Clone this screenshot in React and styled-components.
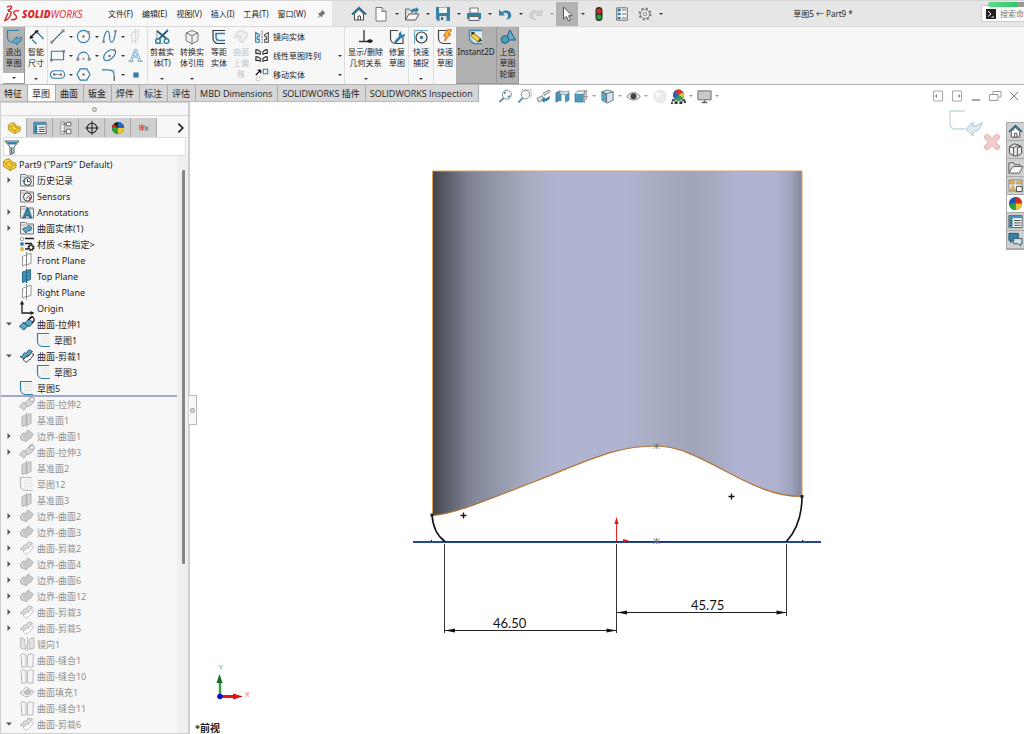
import React from "react";
import styled, { createGlobalStyle, css } from "styled-components";

const Global = createGlobalStyle`
  * { box-sizing: border-box; }
  html, body, #root { height: 100%; }
  body { margin: 0; overflow: hidden; background: #fff; }
  body, button, input {
    font-family: "Noto Sans", "Noto Sans CJK SC", sans-serif;
    font-size: 9px;
    color: #222;
  }
  button { border: 0; padding: 0; margin: 0; background: none; }
  ul { list-style: none; margin: 0; padding: 0; }
  svg { display: block; flex: none; }
`;

const blue = "#2f7fa6";
const sky = "#62aed0";

/* ---------- icon drawings, all on a 16 unit grid ---------- */
const L = (props) => <path fill="none" stroke={blue} strokeWidth="1.2" {...props} />;

const glyphs = {
  home: <><path d="M3.5 8v6h9V8L8 3.5z" fill="#fff" stroke="#444" /><path d="M7 14v-4h2.5v4" fill="none" stroke="#444" /><path d="M1 8.5 8 1.8l7 6.7" fill="none" stroke="#246b8d" strokeWidth="1.8" /></>,
  file: <><path d="M3 1.5h6l4 4V15H3z" fill="#fff" stroke="#777" /><path d="M9 1.5v4h4" fill="#ddd" stroke="#777" /></>,
  open: <><path d="M1.5 14V3h4l1.5 2h5v3" fill="#ddd" stroke="#666" /><path d="M1.5 14 5 8h10l-3.5 6z" fill="#f6f6f6" stroke="#555" /><path d="M7 6c0-3 2-4 5-3.5V1l3 3-3 2.5V5C10 5 9 5 8.5 7z" fill={blue} /></>,
  save: <><path d="M1 1h14v14H3l-2-2z" fill="#3b83a6" /><path d="M4 1.500h8V7H4z" fill="#f3f3f3" /><path d="M4.500 10h7v5h-7z" fill="#ddd" /><path d="M6 11h2v3H6z" fill="#286f92" /></>,
  print: <><path d="M4 2h8v5H4z" fill="#fff" stroke="#777" /><path d="M1 7h14v6H1z" fill={blue} /><path d="M3 10.500h10v4H3z" fill="#eee" stroke="#666" /></>,
  undo: <path d="M2 3.500v6h6L6 7.500c3-2 5 0 5 2.500 0 2-1 3-2.500 3.500C13 13.500 15 11 14 8 13 4.500 8.500 3 4.500 6z" fill={blue} />,
  redo: <path d="M14 3.500v6H8l2-2c-3-2-5 0-5 2.500 0 2 1 3 2.500 3.500C3 13.500 1 11 2 8c1-3.500 5.500-5 9.500-2z" fill="#d2d2d2" stroke="#bbb" strokeWidth=".5" />,
  cursor: <path d="M4.500 1v12l3-2.500 2 4.500 2-1-2-4.300h3.700z" fill="#fff" stroke="#555" />,
  traffic: <><rect x="4" y="0" width="8" height="16" rx="4" fill="#2a2a2a" /><circle cx="8" cy="4.500" r="2.900" fill="#d8291c" /><circle cx="8" cy="11.500" r="2.900" fill="#27a03a" /></>,
  list: <><path d="M2 1h12v14H2z" fill="#fff" stroke="#555" /><path d="M3 2h3.500v3H3zM3 6.500h3.500v3H3zM3 11h3.500v3H3z" fill={blue} /><path d="M8 3.500h4.500M8 8h4.500M8 12.500h4.500" stroke="#444" /></>,
  gear: <><circle cx="8" cy="8" r="6.300" fill="none" stroke="#777" strokeWidth="2.200" strokeDasharray="2.500 2.450" /><circle cx="8" cy="8" r="5" fill="#fafafa" stroke="#777" /><circle cx="8" cy="8" r="2.200" fill="#e6e6e6" stroke="#777" /></>,
  pin: <path d="m9 2 5 5-1.500.5-2.500 2.500-.5 3L7 10.500 3 14l3-4.500L3.500 7l3-.5L9 4z" fill="#777" />,

  exit: <><L d="M13 1.500H1.500V8c0 3 2 5.500 5 5.500h1" /><path d="M6.500 12 11 7.500v2.300c2 0 3.500-.6 5-2-.2 4-2 6-5 6.200v2z" fill={sky} stroke="#255f7c" strokeWidth=".7" /></>,
  smart: <><path d="M2 9 9 2" stroke="#111" strokeWidth="1.300" /><path d="M10.500 1l-4 1 3 3zM1.500 10l1.300-4 2.700 2.700z" fill="#111" /><L d="m4 10.500 4.500 4.500M9 3l6.500 7" /></>,
  line: <><L d="M2 14 14 2" stroke="#245e7c" /><path d="M.500 12.500h3v3h-3zM12.500.500h3v3h-3z" fill="#888" /></>,
  circle: <><L d="M14.500 8a6.500 6.500 0 1 1-13 0 6.500 6.500 0 0 1 13 0z" /><circle cx="8" cy="8" r="1.300" fill="#777" /><path d="M12 2h2.500v2.500H12z" fill="#888" /></>,
  spline: <><L d="M1.500 14C2 6 5 0 7 3c2 2.500 0 10 3 11 2 .4 4-5 4.500-12" /><path d="M.500 12.500H3V15H.500zM13 1h2.500v2.500H13z" fill="#888" /></>,
  plane: <><path d="m4 4 7-3v10l-7 4z" fill="#f2f2f2" stroke="#ccc" strokeDasharray="2 1" /><path d="M8 0v16" stroke="#ccc" strokeDasharray="2 1" /></>,
  rect: <><L d="M1.500 3.500h13v9h-13z" /><path d="M0 11.500h3v3H0zM13 2h3v3h-3z" fill="#888" /></>,
  arc: <><L d="M2 11.500C2 2 14 2 14 11.500" /><path d="M.500 10.500h3v3h-3zM12.500 10.500h3v3h-3zM7 10.500h2v2H7z" fill="#888" /></>,
  ellipse: <><L d="M3 13C0 10 3 5 7 3c4-2.200 8-1 7.500 2-.5 4-7 10-11.500 8z" /><circle cx="8" cy="8.500" r="1.300" fill="#777" /><path d="M12 1h2.500v2.500H12z" fill="#888" /></>,
  letterA: <path d="M1 14.500v-1h1.500L7 1.500h2l4.500 12H15v1h-4.500v-1h1L10.300 10H5.500l-1.200 3.500h1.200v1zM6 8.500h3.800L8 3.500z" fill="#e8f3f8" stroke="#5793b0" strokeWidth=".7" />,
  slot: <><L d="M4.500 4h7a4 4 0 0 1 0 8h-7a4 4 0 0 1 0-8z" /><path d="M4 8h8" stroke="#999" /><path d="M3.500 7h2v2h-2zM10.500 7h2v2h-2z" fill="#555" /></>,
  hex: <><L d="M4.500 2h7L15 8l-3.500 6h-7L1 8z" /><circle cx="8" cy="8" r="1.300" fill="#777" /></>,
  fillet: <><L d="M0 3h6c5 0 7 3 7 6" /><path d="M13 9v6" stroke="#555" strokeWidth="1.300" /><path d="M8 3h5v4" stroke="#999" fill="none" strokeDasharray="1 1" /></>,
  point: <path d="M4 4h8v8H4z" fill={blue} stroke="#7fb2cb" />,

  trim: <><path d="M3 1v14M1 14.500h8" stroke="#999" /><path d="m3 2 10 8M14 1 5 10" stroke="#285f7b" strokeWidth="1.800" /><circle cx="4" cy="12" r="2.300" fill="#fff" stroke={blue} strokeWidth="1.500" /><circle cx="12.500" cy="12" r="2.300" fill="#fff" stroke={blue} strokeWidth="1.500" /></>,
  cube: <><path d="m2 4 6-2.500L14 4v7.500L8 15l-6-3.500z" fill="#eee" stroke="#777" /><path d="M2 4l6 2.500L14 4M8 6.500V15" fill="none" stroke="#777" /></>,
  offset: <><L d="M14 1.500H2V8c0 4 2 6.500 5.500 6.500H14" stroke="#333" /><L d="M14 4.500H5V8c0 2.500 1 3.500 3.500 3.500H14" strokeWidth="1.500" /></>,
  surfOffset: <path d="M1 8 6 2c3-1 7 1 9 4l-4 5-2 3-3-3 2-3C7 7 5 7 3 9z" fill="#eee" stroke="#ccc" />,
  mirror: <><L d="M.800 3v11h4V10.500h-2V8L5 7V5.500z" strokeWidth="1.400" /><L d="M15.200 3v11h-4V10.500h2V8L11 7V5.500z" stroke="#444" /><path d="M8 1v14" stroke="#555" strokeDasharray="2 1" /></>,
  pattern: <><L d="M1 1h2l3 2v3L3 5H1zM1 9h2l3 2v3l-3-1H1z" stroke="#222" /><L d="M14 1h-2L9 3v3l3-1h2zM14 9h-2l-3 2v3l3-1h2z" stroke="#222" /></>,
  move: <><L d="M9.500 1.500h5v5h-5z" /><path d="m1 8 5-5M6.500 2.500H3M6.500 2.500V6" stroke="#111" strokeWidth="1.400" /><path d="M1.500 10.500h4v4h-4z" fill="#fff" stroke="#ccc" /></>,
  relations: <><path d="M6 1v11M1 12.500h10" stroke="#333" strokeWidth="1.300" /><path d="M9 12c2-2.500 4-2.500 6 0-2 2.500-4 2.500-6 0z" fill="#222" /></>,
  repair: <><L d="M9 1.500H1.500V9c0 3 2 5.500 5 5.500H14V9" stroke="#444" /><path d="M5 13 10 7c-1-2 0-4 2.500-5L12 4.500l1.500 1.200L16 5c0 3-2 4.500-4 4l-5 5.500z" fill={blue} /></>,
  snap: <><path d="M1.500 15V1.500H15" stroke="#6aa6c2" fill="none" /><L d="M14 8.500a5.500 5.500 0 1 1-11 0 5.500 5.500 0 0 1 11 0z" stroke="#333" /><circle cx="8.500" cy="8.500" r="1.700" fill={blue} /></>,
  rapid: <><L d="M10 1.500H1.500V9c0 3 2 5.500 5 5.500H14" stroke="#444" /><path d="M11 0 6.500 7H9l-1.500 5L14 5h-3l4-4z" fill="#ffb52b" stroke="#c9541b" strokeWidth=".8" /></>,
  instant: <><path d="M2 2h12v12H7L2 9z" fill="#dcebf2" /><L d="M14 1.500H1.500V9c0 3 2 5.500 5 5.500H14" stroke="#3c8bb0" strokeWidth="1.400" /><path d="m4 3 9 7-3 3-7-6z" fill="#ffd42f" stroke="#444" strokeWidth=".7" /><path d="M3 3.500 7 3 5 6zM14 12l-4 1 2-4z" fill="#222" /></>,
  shaded: <><path d="m10 1 5.500 10h-10z" fill={sky} stroke="#205c7a" /><circle cx="5" cy="10.500" r="3.800" fill="#4d9dc1" stroke="#205c7a" /></>,

  zoomFit: <><circle cx="9.500" cy="6" r="4.800" fill="#f4fafc" stroke="#888" /><path d="M6 9.500 1.500 14" stroke="#6a8ea0" strokeWidth="2.200" /><path d="m7 5 1.500-1.500H7zM12 7l-1.500 1.500H12z" fill={blue} stroke={blue} /></>,
  zoomArea: <><path d="M5 1h10v9" stroke="#999" fill="none" strokeDasharray="2 1" /><circle cx="9" cy="6" r="4.500" fill="#eff7fb" stroke="#888" /><path d="M6 9.500 1.500 14.500" stroke="#5a99b7" strokeWidth="2.200" /></>,
  prev: <><path d="m1 10 6-3 1 4-5 3zM8 4l6-3 1 2-6 4z" fill="#ddd" stroke="#888" /><path d="M6 12 9 8v2c3 0 4-1 6-3 0 4-2 6-6 6v2z" fill={blue} /></>,
  section: <><path d="M1 4 5 2v10l-4 2z" fill="#4a93b6" stroke="#345" strokeWidth=".6" /><path d="m5 2 6 1 4-1v10l-4 2V6L5 5z" fill="#d8e6ed" stroke="#777" strokeWidth=".7" /><path d="m11 6 4-2v8l-4 2zM5 5l2 .500v8L5 12z" fill="#4a93b6" /></>,
  orient: <><path d="M1 5h9v9H1z" fill="#4f9bbd" stroke="#357" strokeWidth=".5" /><path d="m1 5 3-3h10l-4 3M10 14l3-3V2" fill="#eee" stroke="#888" /><path d="M9 8h6M11 1v14" stroke="#999" /></>,
  display: <><path d="m2 3 6-2 6 2v9l-6 3-6-3z" fill="#d5e6ee" stroke="#555" strokeWidth=".8" /><path d="m2 3 5 2v10l-5-3z" fill="#5ba3c4" /><path d="m2 3 5 2 7-2M7 5v10" fill="none" stroke="#555" strokeWidth=".8" /></>,
  eye: <><path d="M1 8c4-5.500 10-5.500 14 0-4 5-10 5-14 0z" fill="#eee" stroke="#777" /><circle cx="8" cy="7.800" r="3.200" fill="#444" /></>,
  sphere: <><circle cx="8.500" cy="8" r="6.500" fill="#ececec" stroke="#ddd" /><circle cx="6" cy="6" r="2.500" fill="#fafafa" /></>,
  scene: <><path d="M0 11h16v5H0z" fill="#eee" /><path d="M1 11h3v2H1zM4 13h3v3H4zM9 13h3v3H9zM12 11h3v2h-3zM0 14h2v2H0zM14 13h2v2h-2z" fill="#333" /><circle cx="8" cy="6.500" r="6" fill="#2c62b7" /><path d="M8 6.500 4 2a6 6 0 0 1 9 1.500z" fill="#d63a2c" /><path d="M8 6.500 13 3.500a6 6 0 0 1 0 6z" fill="#e8c735" /><path d="M8 6.500 13 9.500a6 6 0 0 1-9 1.500z" fill="#2fa14a" /></>,
  monitor: <><path d="M1 2h14v9.500H1z" fill="#c9c9c9" stroke="#666" /><path d="M5 14.500h6M8 12v2.500" stroke="#666" strokeWidth="1.600" /></>,
  paneL: <><path d="M3.500 3h9v10h-9z" fill="none" stroke="#a8a8a8" /><path d="M7 6v4L5 8z" fill="#777" /></>,
  paneR: <><path d="M3.500 3h9v10h-9z" fill="none" stroke="#a8a8a8" /><path d="M9.500 6v4l2-2z" fill="#777" /></>,
  minimize: <path d="M4 12h8" stroke="#888" strokeWidth="1.500" />,
  restore: <path d="M6 6V3.500h8V9h-2M2.500 6.500H11v6H2.500z" fill="none" stroke="#999" />,
  close: <path d="m4 4 8 8m0-8-8 8" stroke="#777" />,

  part: <><path d="M1.500 5 4 2.500 8 2l2 2-.5 3 3-1.500 2.500 1.500v4L9 14.500 1.500 10z" fill="#f6d23f" stroke="#a9830f" strokeWidth=".9" /><path d="M1.500 5 4.500 6.500 9.500 4M4.500 6.500V9L9 11l6-3.500M9 11v3.500M9.500 7 12 8" fill="none" stroke="#a9830f" strokeWidth=".8" /></>,
  props: <><path d="M1 1.500h14v13H1z" fill="#fff" stroke="#555" /><path d="M1 1.500h14v3H1zM1 4h4v10.500H1z" fill="#4b92b4" /><path d="M6.500 7h7M6.500 9.500h7M6.500 12h7M2.500 7H4M2.500 9.500H4M2.500 12H4" stroke="#333" /></>,
  config: <><path d="M2 1h4v14H2z" fill="#f3f3f3" stroke="#888" /><path d="M8.500 1.500h5v4h-5zM8.500 9.500h5v5h-5z" fill="#fff" stroke="#555" /><path d="M4 3.500h4M4 12h4" stroke="#555" /></>,
  target: <><circle cx="8" cy="8" r="5.500" fill="none" stroke="#222" strokeWidth="1.200" /><path d="M8 0v16M0 8h16" stroke="#222" strokeWidth="1.200" /></>,
  ball: <><circle cx="8" cy="8" r="7" fill="#2153ad" /><path d="M8 8V1a7 7 0 0 1 7 7z" fill="#d92a1e" /><path d="M8 8h7a7 7 0 0 1-7 7z" fill="#e9c92e" /><path d="M8 8v7a7 7 0 0 1-7-7z" fill="#2aa23d" /></>,
  ballTab: <><circle cx="8" cy="8" r="7" fill="#222" /><path d="M8 8V1a7 7 0 0 1 7 7z" fill="#2368ba" /><path d="M8 8h7a7 7 0 0 1-7 7z" fill="#e9c92e" /><path d="M8 8v7a7 7 0 0 1-7-7z" fill="#2aa23d" /><path d="M8 8H1a7 7 0 0 1 2-5z" fill="#d92a1e" /></>,
  cam: <><path d="M3 5h4v5H3zM4 7.500h3M6 6v5" fill="#f7b9b9" stroke="#dd3a3a" /><path d="m8.500 5 1.500 6 1.500-5 1 5" fill="none" stroke="#8a6a6a" /></>,
  filter: <><path d="M1 2h14l-5 6v6l-4 1.500V8z" fill="#fff" stroke="#555" /><path d="M2.500 3h11l-2 2.500h-7zM7 8h1.500v6L7 14.500z" fill={blue} /></>,
  chevron: <path d="m5 3 5 5-5 5" fill="none" stroke="#222" strokeWidth="2" />,

  library: <><path d="m1.500 5 5-3 4 1 4 2v7l-4 2.500-4 .5-5-3z" fill="#eee" stroke="#444" /><path d="M6 6v8.500M10 6v8M1.500 5 6 6l4-2 4 1M10 6l4-1" fill="none" stroke="#444" /></>,
  folder: <><path d="M1 14V3h5l1 2h6v2" fill="#ddd" stroke="#555" /><path d="m1 14 4-7h11l-4 7z" fill="#f7f7f7" stroke="#555" /></>,
  palette: <><path d="M1 2h14v12H1z" fill="#eee" stroke="#888" /><path d="M2 3h5v3.500H2zM9 6.500l1-4 2 2 2-2v4zM2 13l3-5 3 5z" fill="#eebf1b" stroke="#866" strokeWidth=".5" /><path d="M9 9h6v5.500H9z" fill="#fff" stroke="#444" /></>,
  forum: <><path d="M1 1.500h10V9H5l-2 2.500V9H1z" fill="#3583a9" stroke="#256" /><path d="M6 7h9v5.500h-1.500V15L11 12.500H6z" fill="#cfe3ec" stroke="#456" /></>,
};

const folderBase = <><path d="M1.500 14V2.500h5L8 4h6.500v10z" fill="#ececec" stroke="#777" /><path d="M1.500 5H14" stroke="#aaa" /></>;
const tone = (off) => ({ fill: off ? "#d6d6d6" : "#5ca9cc", line: off ? "#adadad" : "#1d4d66" });

const treeGlyph = (kind, off) => {
  const t = tone(off);
  switch (kind) {
    case "history": return <>{folderBase}<circle cx="8.500" cy="9.500" r="3.800" fill="#fff" stroke="#333" /><path d="M8.500 7v2.700h2.500" fill="none" stroke="#333" /><path d="m3 8 2 3 2-2.500z" fill={blue} /></>;
    case "sensors": return <>{folderBase}<circle cx="8.500" cy="9" r="4" fill="#fff" stroke="#444" /><path d="m7 11 3.500-4" stroke="#444" /><path d="M10 9h2v3h-2z" fill="#d33" /></>;
    case "notes": return <>{folderBase}<path d="M3.500 14 8 4h1.500L13 14h-2.500l-.7-2H7l-.7 2zM7.500 10h2l-1-3z" fill={blue} stroke="#1d4d66" strokeWidth=".5" /></>;
    case "bodies": return <>{folderBase}<path d="m3.500 9 2-1.500 1.500.5L10 5.500 13 8l-2 3-2-.5L7 13z" fill="#5ca9cc" stroke="#1d4d66" strokeWidth=".8" /></>;
    case "material": return <><circle cx="3" cy="3" r="1.700" fill="#fff" stroke="#777" strokeWidth=".7" /><circle cx="3" cy="8" r="1.900" fill={blue} /><circle cx="3" cy="13" r="1.900" fill="#e5b322" /><path d="M6 2.500h9M6 7.500h7M6 13h3" stroke="#222" strokeWidth="1.700" /><circle cx="12" cy="11.500" r="2.700" fill="#fff" stroke="#222" strokeWidth="1.900" strokeDasharray="1.500 .6" /><circle cx="12" cy="11.500" r="2" fill="none" stroke="#222" /></>;
    case "plane": return <><path d="M3.500 4.500v9.500l4-1.500V2.800zM7.500 2.800l4.500-1.500v10l-4.500 1.500" fill="#fff" stroke="#8a8a8a" strokeWidth=".9" /><path d="M7.500 0v16" stroke="#777" strokeDasharray="2 1" /></>;
    case "topPlane": return <><path d="m3.500 4 8-2.500v10l-8 3z" fill="#3f90b6" stroke="#2a6c8d" /><path d="M7.500 1v14" stroke="#1d4d66" strokeDasharray="2 1" /></>;
    case "refPlane": return <><path d="m3 4.500 4-1.500v10l-4 1.500zM8 3l4-1.500v10L8 13z" fill="#d4d4d4" stroke="#b2b2b2" /><path d="M7.500 1v14" stroke="#b2b2b2" strokeDasharray="2 1" /></>;
    case "origin": return <><path d="M3 2v11h11" fill="none" stroke="#222" strokeWidth="1.300" /><path d="m.800 4.500 2.200-4 2.200 4zM11.500 11l4 2-4 2z" fill="#222" /></>;
    case "sketch": return <><path d="M5 4h9M5 7h9M5 10h9M6 3v10M9 3v10M12 3v10" stroke="#e2e2e2" strokeWidth=".7" /><path d="M13 1.500H1.500V9c0 3 2 5.500 5 5.500H14" fill="none" stroke={off ? "#bbb" : blue} strokeWidth="1.200" /></>;
    case "extrude": return <><path d="M.500 10.500 4 6.500l2 .500 4-4 4 3.500-3.500 4-2-.5L5 14z" fill={t.fill} stroke={t.line} strokeWidth=".9" /><path d="m9 4 4-3M10.500 1.500l3-1 2 3.500M13 7l2.500-3" fill="none" stroke={off ? "#aaa" : "#111"} strokeWidth="1.200" /><path d="m4 6.500 4.500 3.500M6 7l4 3.500" stroke={t.line} strokeWidth=".7" /></>;
    case "trimmed": return <><path d="M1 8.500c2 .500 3-1 3.500-3 .5-1 2-.5 3 0 1-2 1-3.500 3-3.500l3 1.500c-2 0-2 3-3.500 4.500-2 0-3.500 0-4.500 3z" fill={off ? "#dedede" : "#5ca9cc"} stroke={t.line} strokeWidth=".9" /><path d="M4 11.500c2-.500 2-3 4-3 3 0 2.500-3 4.500-3.500L15 7c-2 0-2 3.500-4 4.500-2 0-2.500 2.500-4 3z" fill="#fff" stroke={off ? "#bbb" : "#222"} strokeWidth=".9" /></>;
    case "boundary": return <><path d="m1 9 3-4 2 1 3-4 5 4-2 4-2 .500L7 14l-2-2-2 .500z" fill="#d2d2d2" stroke="#b0b0b0" /><path d="m4 9 6-5M6 11l6-5" stroke="#b0b0b0" /></>;
    case "mirror": return <path d="M1 2h3l2 2-1 3 2 2v4H3L1 11l1-4zM15 2h-3l-2 2v3l1 2-1 4h3l2-1V7zM8.500 1v14" fill="#e2e2e2" stroke="#bbb" />;
    case "knit": return <path d="M1.500 3 4 1.500 7 3v12H2.500V7zM15 3l-3-1.500L8.500 3v12H14V7z" fill="#f4f4f4" stroke="#bbb" />;
    case "fillSurf": return <><path d="m1 9 6-6 8 5-6 5-4-1z" fill="#eee" stroke="#b5b5b5" /><path d="m5 8.500 3-3 4 2.500-3 2.500z" fill="#c4c4c4" stroke="#a8a8a8" /></>;
    default: return null;
  }
};

const Drawing = ({ size = 16, children }) => (
  <svg width={size} height={size} viewBox="0 0 16 16" aria-hidden="true">{children}</svg>
);
const Icon = ({ name, size }) => <Drawing size={size}>{glyphs[name]}</Drawing>;

/* ---------- page frame ---------- */
const Shell = styled.div`
  display: flex;
  flex-direction: column;
  height: 100vh;
  min-height: 0;
  overflow: hidden;
`;

const TitleBar = styled.header`
  display: flex;
  align-items: stretch;
  flex: none;
  height: 27px;
  background: #e6e6e6;
  border-top: 1px solid #d5d5d5;
  border-bottom: 1px solid #d8d8d8;
`;
const Brand = styled.div`
  display: flex;
  align-items: center;
  flex: none;
  width: 332px;
  padding-left: 4px;
  background: #f8f8f8;
`;
const Wordmark = styled.span`
  width: 88px;
  padding-left: 2px;
  font: italic 10px "Open Sans", sans-serif;
  color: #da2a2a;
  b { font-weight: 800; }
`;
const Menu = styled.nav`
  display: flex;
  flex: 1;
  gap: 9px;
`;
const MenuItem = styled.button`
  font-size: 8px;
  white-space: nowrap;
`;
const QuickBar = styled.div`
  display: flex;
  align-items: center;
  flex: none;
  padding-left: 16px;
`;
const Tool = styled.button`
  display: flex;
  align-items: center;
  justify-content: center;
  flex: none;
  width: ${(p) => p.$w || 22}px;
  height: ${(p) => p.$h || 24}px;
  background: ${(p) => (p.$on ? "#b3b3b3" : "none")};
`;
const CaretBox = styled.button`
  display: flex;
  align-items: center;
  justify-content: center;
  flex: none;
  width: ${(p) => p.$w || 9}px;
  height: ${(p) => p.$h || 24}px;
  &::after {
    content: "";
    border: 2px solid transparent;
    border-top-color: ${(p) => (p.$dim ? "#999" : "#333")};
    border-bottom: 0;
  }
`;
const Trio = styled.div`
  display: flex;
  gap: 1px;
  padding-left: 1px;
`;
const DocTitle = styled.h1`
  flex: 1;
  align-self: center;
  margin: 0;
  font-size: 8px;
  font-weight: 400;
  text-align: center;
`;
const Search = styled.label`
  position: relative;
  display: flex;
  align-items: center;
  align-self: center;
  gap: 4px;
  flex: none;
  width: 43px;
  height: 17px;
  padding-left: 4px;
  background: #fff;
  border: 1px solid #ccc;
  border-right: 0;
  input {
    width: 26px;
    padding: 0;
    border: 0;
    outline: 0;
    font-size: 8px;
    background: none;
  }
  input::placeholder { color: #777; opacity: 1; }
`;
const Progress = styled.span`
  position: absolute;
  top: -4px;
  left: 6px;
  right: 0;
  height: 5px;
  border-radius: 3px 0 0 3px;
  background: linear-gradient(90deg, #5fdc86, #2cc968 84%, #999 84%);
`;

/* ---------- ribbon ---------- */
const Ribbon = styled.div`
  display: flex;
  flex: none;
  height: 58px;
  padding-left: 3px;
  background: #f7f7f7;
  border-bottom: 1px solid #b4b4b4;
`;
const Group = styled.div`
  display: flex;
  flex: none;
  border-right: ${(p) => (p.$last ? 0 : 1)}px solid #ddd;
`;
const Command = styled.button`
  display: flex;
  flex-direction: column;
  align-items: center;
  flex: none;
  width: ${(p) => p.$w || 22}px;
  padding-top: 2px;
  font-size: 8px;
  line-height: 11px;
  white-space: pre-line;
  color: ${(p) => (p.$off ? "#c4c4c4" : "#222")};
  ${(p) => p.$on && css`background: #b1b1b1; border: 1px solid #999; border-width: 0 1px 1px 0;`}
  & > span { margin-top: 1px; }
  & > i {
    display: flex;
    justify-content: center;
    align-items: center;
    width: 100%;
    height: 10px;
    margin-top: auto;
    background: ${(p) => (p.$on ? "#fff" : "none")};
  }
  & > i::after {
    content: "";
    border: 2px solid transparent;
    border-top-color: #333;
    border-bottom: 0;
  }
`;
const SketchTools = styled.div`
  display: grid;
  grid-template-columns: repeat(3, 17px 9px) 20px;
  grid-auto-rows: 19px;
  padding-left: 1px;
`;
const RowTools = styled.div`
  display: flex;
  flex-direction: column;
  width: 92px;
`;
const RowTool = styled.div`
  display: flex;
  align-items: center;
  height: 19px;
`;
const RowLabel = styled.button`
  display: flex;
  align-items: center;
  gap: 4px;
  flex: 1;
  padding-left: 3px;
  font-size: 8px;
  white-space: nowrap;
`;

/* ---------- tab strip and view toolbar ---------- */
const Strip = styled.div`
  position: relative;
  z-index: 1;
  display: flex;
  flex: none;
  height: 17px;
`;
const Tab = styled.button`
  flex: none;
  padding: 0 5px 0 4px;
  border-right: 1px solid #aaa;
  border-bottom: 1px solid #bbb;
  background: ${(p) => (p.$on ? "#fcfcfc" : "#d6d6d6")};
  font-family: "Open Sans", "Noto Sans CJK SC", sans-serif;
  white-space: nowrap;
`;
const ViewTools = styled.div`
  display: flex;
  padding: 2px 0 0 17px;
`;
const WindowTools = styled(ViewTools)`
  margin-left: auto;
  padding: 2px 1px 0 0;
`;
const Work = styled.div`
  display: flex;
  flex: 1;
  min-height: 0;
`;

/* ---------- feature manager ---------- */
const Panel = styled.aside`
  position: relative;
  display: flex;
  flex-direction: column;
  flex: none;
  width: 190px;
  background: #f7f7f7;
  border: 1px solid #d0d0d0;
  border-right: 2px solid #cfcfcf;
`;
const Grip = styled.div`
  display: flex;
  align-items: center;
  justify-content: center;
  flex: none;
  height: 13px;
  border-bottom: 1px solid #d6d6d6;
`;
const Dot = styled.span`
  width: 5px;
  height: 5px;
  border: 1px solid #999;
  border-radius: 50%;
  background: #ddd;
`;
const PanelTabs = styled.div`
  display: flex;
  flex: none;
  align-items: center;
  padding-top: 2px;
`;
const PanelTab = styled.button`
  display: flex;
  align-items: center;
  justify-content: center;
  width: 26px;
  height: 19px;
  border-right: 1px solid #aaa;
  background: ${(p) => (p.$on ? "#f7f7f7" : "#d0d0d0")};
`;
const Expand = styled.button`
  margin-left: auto;
`;
const FilterBox = styled.div`
  display: flex;
  align-items: center;
  flex: none;
  height: 19px;
  margin: 0 2px;
  background: #fff;
  border: 1px solid #ddd;
  input { flex: 1; min-width: 0; border: 0; outline: 0; background: none; }
`;
const TreeArea = styled.div`
  display: flex;
  flex: 1;
  min-height: 0;
`;
const Tree = styled.ul`
  flex: 1;
  min-width: 0;
  overflow: hidden;
`;
const Node = styled.li`
  position: relative;
  display: flex;
  align-items: center;
  height: 16px;
  padding-left: ${(p) => [1, 2, 19][p.$depth]}px;
  white-space: nowrap;
  color: ${(p) => (p.$off ? "#909090" : "#1c1c1c")};
  & > svg { margin: 0 2px 0 ${(p) => (p.$depth ? 1 : 0)}px; }
  ${(p) => p.$bar && css`
    &::after {
      content: "";
      position: absolute;
      inset: auto 0 -1px 0;
      height: 2px;
      background: #a4a8c8;
    }
  `}
`;
const Twist = styled.button`
  display: flex;
  align-items: center;
  width: 15px;
  height: 16px;
  padding-left: 3px;
`;
const TrackBar = styled.div`
  display: flex;
  flex: none;
  width: 11px;
  padding: 14px 3px 0 5px;
  background: #efefef;
`;
const Thumb = styled.div`
  width: 3px;
  height: 70%;
  border-radius: 1px;
  background: #858585;
`;
const SideHandle = styled.button`
  position: absolute;
  z-index: 2;
  top: 292px;
  right: -9px;
  display: flex;
  align-items: center;
  justify-content: center;
  width: 8px;
  height: 30px;
  background: #f7f7f7;
  border: 1px solid #bbb;
  border-left: 0;
`;

/* ---------- graphics area ---------- */
const Viewport = styled.main`
  position: relative;
  flex: 1;
  min-width: 0;
  background: #fff;
  & > svg { width: 100%; height: 100%; }
`;
const Corner = styled.div`
  position: absolute;
  top: 7px;
  right: 23px;
  display: flex;
`;
const CornerButton = styled.button`
  align-self: flex-start;
  padding-top: ${(p) => p.$drop || 0}px;
`;
const TaskPane = styled.div`
  position: absolute;
  top: 20px;
  right: 0;
  width: 18px;
  border: 1px solid #aaa;
  border-right: 0;
`;
const Task = styled.button`
  display: flex;
  align-items: center;
  justify-content: center;
  width: 100%;
  height: 18px;
  background: ${(p) => (p.$on ? "#fff" : "#d0d0d0")};
  border-bottom: 1px solid #aaa;
`;
const ViewName = styled.div`
  position: absolute;
  left: 5px;
  bottom: -1px;
  font: bold 10px/12px "Liberation Serif", "Noto Sans CJK SC", serif;
`;

const tree = [
  ["history", "历史记录", 1, "r"],
  ["sensors", "Sensors", 1],
  ["notes", "Annotations", 1, "r"],
  ["bodies", "曲面实体(1)", 1, "r"],
  ["material", "材质 <未指定>", 1],
  ["plane", "Front Plane", 1],
  ["topPlane", "Top Plane", 1],
  ["plane", "Right Plane", 1],
  ["origin", "Origin", 1],
  ["extrude", "曲面-拉伸1", 1, "d"],
  ["sketch", "草图1", 2],
  ["trimmed", "曲面-剪裁1", 1, "d"],
  ["sketch", "草图3", 2],
  ["sketch", "草图5", 1, "", false, true],
  ["extrude", "曲面-拉伸2", 1, "", true],
  ["refPlane", "基准面1", 1, "", true],
  ["boundary", "边界-曲面1", 1, "r", true],
  ["extrude", "曲面-拉伸3", 1, "r", true],
  ["refPlane", "基准面2", 1, "", true],
  ["sketch", "草图12", 1, "", true],
  ["refPlane", "基准面3", 1, "", true],
  ["boundary", "边界-曲面2", 1, "r", true],
  ["boundary", "边界-曲面3", 1, "r", true],
  ["trimmed", "曲面-剪裁2", 1, "r", true],
  ["boundary", "边界-曲面4", 1, "r", true],
  ["boundary", "边界-曲面6", 1, "r", true],
  ["boundary", "边界-曲面12", 1, "r", true],
  ["trimmed", "曲面-剪裁3", 1, "r", true],
  ["trimmed", "曲面-剪裁5", 1, "r", true],
  ["mirror", "镜向1", 1, "", true],
  ["knit", "曲面-缝合1", 1, "", true],
  ["knit", "曲面-缝合10", 1, "", true],
  ["fillSurf", "曲面填充1", 1, "", true],
  ["knit", "曲面-缝合11", 1, "", true],
  ["trimmed", "曲面-剪裁6", 1, "d", true],
];

const TreeNode = ({ item: [kind, label, depth, twist, off, bar] }) => (
  <Node $depth={depth} $off={off} $bar={bar}>
    <Twist tabIndex={twist ? 0 : -1} aria-label={`展开 ${label}`}>
      {twist && (
        <svg width="6" height="6" viewBox="0 0 6 6" aria-hidden="true">
          <path d={twist === "r" ? "M1.500 0v6l3-3z" : "M0 1.500h6l-3 3z"} fill="#555" />
        </svg>
      )}
    </Twist>
    <Drawing>{treeGlyph(kind, off)}</Drawing>
    {label}
  </Node>
);

const Star = ({ x, y }) => (
  <path d={`M${x - 3} ${y}h6M${x} ${y - 3}v6M${x - 3} ${y - 3}l6 6M${x + 3} ${y - 3}l-6 6`} stroke="#777" strokeWidth=".8" />
);
const Plus = ({ x, y }) => <path d={`M${x - 3} ${y}h6M${x} ${y - 3}v6`} stroke="#111" strokeWidth="1.300" />;
const Span = ({ x1, x2, y }) => (
  <g stroke="#222" fill="#111">
    <path d={`M${x1} ${y}H${x2}`} />
    <path d={`M${x1} ${y}l10-2v4zM${x2} ${y}l-10-2v4z`} stroke="none" />
  </g>
);

const shade = [
  [0, "#43454c"], [4, "#5b5e69"], [10, "#7f8495"], [20, "#999eb2"], [26, "#a8adc4"], [34, "#b0b4d0"],
  [52, "#b0b4d0"], [60, "#a8adc4"], [70, "#a1a5bb"], [76, "#a6aac1"], [83, "#b0b4d2"], [93, "#afb3cf"], [97, "#9fa4bc"], [100, "#82879c"],
];
const wave = "M432.500 515.500C454 514 482 502 536 481S615 446 656 446C702 446 748 497 802 496.500";

const Model = () => (
  <svg viewBox="190 102 834 632" role="img" aria-label="Part9">
    <defs>
      <linearGradient id="shade">
        {shade.map(([o, c]) => <stop key={o} offset={`${o}%`} stopColor={c} />)}
      </linearGradient>
    </defs>
    <path d={`${wave}V171H432.500z`} fill="url(#shade)" />
    <path d="M802 496.500V171H432.500V515.500" fill="none" stroke="#dda05c" />
    <path d={wave} fill="none" stroke="#b87332" strokeWidth="1.200" />
    <path d="M413 542h408" stroke="#2447a0" strokeWidth="2" />
    <path d="M445 541.500h342" stroke="#26355c" />
    <path d="M432 515C433 528 437 536 445 541.500M802 496.500C802 517 796 531 786.500 541.500" fill="none" stroke="#111" strokeWidth="1.600" />
    <path d="M430.500 513.500h3v3h-3zM800.500 495h3v3h-3zM431 540h1v2h-1zM802 540h1v2h-1z" fill="#222" />
    <path d="M616.500 541v-17" stroke="#e22" />
    <path d="m616.500 517 2 7h-4zM629 540.500l-6-1.500v3z" fill="#e11" />
    <Star x={656.5} y={446} />
    <Star x={656.5} y={541} />
    <Plus x={463.5} y={515.5} />
    <Plus x={731.5} y={496.5} />
    <path d="M444.500 544v89M616.500 544v89M786.500 544v72" stroke="#333" />
    <Span x1={445} x2={616.5} y={630.5} />
    <Span x1={617} x2={786.5} y={612.5} />
    <g fontFamily="Lato, sans-serif" fontSize="13" fill="#111">
      <text x="493" y="628">46.50</text>
      <text x="691" y="610">45.75</text>
    </g>
    <path d="M220 696v-14" stroke="#3aa14b" strokeWidth="2.500" />
    <path d="m219.500 674 3 9h-6z" fill="#176a2a" />
    <path d="M220 696.500h14" stroke="#e11" strokeWidth="3" />
    <path d="m243 696.500-10-3v6z" fill="#d11" />
    <circle cx="220" cy="696.500" r="2.800" fill="#1212c0" />
    <g fontFamily="Liberation Sans, sans-serif" fontSize="7">
      <text x="218.500" y="670" fill="#5aaa66">Y</text>
      <text x="245" y="696.500" fill="#e66">X</text>
    </g>
  </svg>
);

const Cmd = ({ icon, label, caret, ...rest }) => (
  <Command {...rest}>
    <Icon name={icon} />
    <span>{label}</span>
    {caret && <i />}
  </Command>
);
const Caret = (props) => <CaretBox aria-label="更多" {...props} />;

const quick = [["home", 0], ["file", 1], ["open", 1], ["save", 1], ["print", 1], ["undo", 1], ["redo", 2]];
const sketchTools = ["line", "", "circle", "", "spline", "", "plane", "rect", "", "arc", "", "ellipse", "", "letterA", "slot", "", "hex", "-", "fillet", "", "point"];
const views = [["zoomFit"], ["zoomArea"], ["prev"], ["section"], ["orient", 1], ["display", 1], ["eye", 1], ["sphere"], ["scene", 1], ["monitor", 1]];

export default function App() {
  return (
    <Shell>
      <Global />
      <TitleBar>
        <Brand>
          <svg width="16" height="17" viewBox="0 0 16 17" aria-hidden="true">
            <g fill="none" stroke="#da2a2a" strokeWidth="1.400">
              <path d="M3 2c3-1.500 5-1 4.500.5C7 4 5 5 3.500 5.200M4 6.200C8 6 7.500 8 6.500 10 5 13.500 3 15 .800 15.500L4 8" />
              <path d="M15 6c-4-1-6 .5-5 2.500.8 1.500 3 2 2.500 4-.5 1.800-3 2.500-5.500 2" />
            </g>
          </svg>
          <Wordmark><b>SOLID</b>WORKS</Wordmark>
          <Menu>
            {["文件(F)", "编辑(E)", "视图(V)", "插入(I)", "工具(T)", "窗口(W)"].map((m) => <MenuItem key={m}>{m}</MenuItem>)}
            <MenuItem aria-label="固定"><Icon name="pin" size={12} /></MenuItem>
          </Menu>
        </Brand>
        <QuickBar>
          {quick.map(([n, c]) => (
            <React.Fragment key={n}>
              <Tool aria-label={n}><Icon name={n} size={16} /></Tool>
              {c > 0 && <Caret $dim={c === 2} />}
            </React.Fragment>
          ))}
          <Tool $on aria-label="cursor"><Icon name="cursor" /></Tool>
          <Caret />
          <Trio>
            {["traffic", "list", "gear"].map((n) => <Tool key={n} aria-label={n}><Icon name={n} size={14} /></Tool>)}
          </Trio>
          <Caret />
        </QuickBar>
        <DocTitle>草图5 ← Part9 *</DocTitle>
        <Search>
          <svg width="10" height="10" viewBox="0 0 10 10" aria-hidden="true">
            <path d="M0 0h10v10H0z" fill="#222" />
            <path d="m2 2 3 3-3 2.500M5.500 8H8" fill="none" stroke="#fff" />
          </svg>
          <input type="text" placeholder="搜索命" aria-label="搜索命令" />
          <Progress />
        </Search>
      </TitleBar>

      <Ribbon>
        <Group>
          <Cmd $on icon="exit" label={"退出\n草图"} caret />
          <Cmd icon="smart" label={"智能\n尺寸"} caret />
        </Group>
        <Group>
          <SketchTools>
            {sketchTools.map((n, i) => {
              if (n === "-") return <span key={i} />;
              if (!n) return <Caret key={i} $h={19} />;
              return <Tool key={i} $w={17} $h={19} aria-label={n}><Icon name={n} size={n === "point" ? 10 : 15} /></Tool>;
            })}
          </SketchTools>
        </Group>
        <Group>
          <Cmd $w={28} icon="trim" label={"剪裁实\n体(T)"} caret />
          <Cmd $w={32} icon="cube" label={"转换实\n体引用"} caret />
          <Cmd icon="offset" label={"等距\n实体"} />
          <Cmd $off icon="surfOffset" label={"曲面\n上偏\n移"} />
          <RowTools>
            {[["mirror", "镜向实体"], ["pattern", "线性草图阵列", 1], ["move", "移动实体", 1]].map(([n, t, c]) => (
              <RowTool key={n}>
                <RowLabel><Icon name={n} size={14} />{t}</RowLabel>
                {c && <Caret $h={19} />}
              </RowTool>
            ))}
          </RowTools>
        </Group>
        <Group>
          <Cmd $w={41} icon="relations" label={"显示/删除\n几何关系"} caret />
          <Cmd icon="repair" label={"修复\n草图"} />
        </Group>
        <Group>
          <Cmd $w={24} icon="snap" label={"快速\n捕捉"} caret />
        </Group>
        <Group $last>
          <Cmd icon="rapid" label={"快速\n草图"} />
          <Cmd $on $w={41} icon="instant" label="Instant2D" />
          <Cmd $on icon="shaded" label={"上色\n草图\n轮廓"} />
        </Group>
      </Ribbon>

      <Strip>
        {["特征", "草图", "曲面", "钣金", "焊件", "标注", "评估", "MBD Dimensions", "SOLIDWORKS 插件", "SOLIDWORKS Inspection"].map((t, i) => (
          <Tab key={t} $on={i === 1}>{t}</Tab>
        ))}
        <ViewTools>
          {views.map(([n, c]) => (
            <React.Fragment key={n}>
              <Tool $w={19} $h={18} aria-label={n}><Icon name={n} size={15} /></Tool>
              {c && <Caret $dim $w={7} $h={18} />}
            </React.Fragment>
          ))}
        </ViewTools>
        <WindowTools>
          {["paneL", "paneR", "minimize", "restore", "close"].map((n) => (
            <Tool key={n} $w={19} $h={18} aria-label={n}><Icon name={n} /></Tool>
          ))}
        </WindowTools>
      </Strip>

      <Work>
        <Panel>
          <Grip><Dot /></Grip>
          <PanelTabs>
            {["part", "props", "config", "target", "ballTab", "cam"].map((n, i) => (
              <PanelTab key={n} $on={i === 0} aria-label={n}><Icon name={n} size={14} /></PanelTab>
            ))}
            <Expand aria-label="更多选项卡"><Icon name="chevron" size={14} /></Expand>
          </PanelTabs>
          <FilterBox>
            <Icon name="filter" />
            <input type="text" aria-label="过滤" />
          </FilterBox>
          <TreeArea>
            <Tree>
              <Node $depth={0}><Drawing size={15}>{glyphs.part}</Drawing>Part9 ("Part9" Default)</Node>
              {tree.map((item) => <TreeNode key={item[1]} item={item} />)}
            </Tree>
            <TrackBar><Thumb /></TrackBar>
          </TreeArea>
          <SideHandle aria-label="折叠面板"><Dot /></SideHandle>
        </Panel>
        <Viewport>
          <Model />
          <Corner>
            <CornerButton aria-label="确认">
              <svg width="34" height="28" viewBox="0 0 34 28" aria-hidden="true">
                <path d="M16 2H1v12c0 4 2 6 5 6h10" fill="none" stroke="#c5d9e5" strokeWidth="1.300" />
                <path d="m17 20 7-7v4c4 0 6-1 9-4-1 7-4 9-9 10v4z" fill="#dce9ef" stroke="#b4c7d1" />
              </svg>
            </CornerButton>
            <CornerButton $drop={24} aria-label="取消">
              <svg width="18" height="18" viewBox="0 0 18 18" aria-hidden="true">
                <path d="m4 4 10 10m0-10L4 14" stroke="#dcb5b5" strokeWidth="6" strokeLinecap="round" />
                <path d="m4 4 10 10m0-10L4 14" stroke="#f3cbcb" strokeWidth="4.500" strokeLinecap="round" />
              </svg>
            </CornerButton>
          </Corner>
          <TaskPane>
            {["home", "library", "folder", "palette", "ball", "props", "forum"].map((n) => (
              <Task key={n} $on={n === "ball"} aria-label={n}><Icon name={n} size={15} /></Task>
            ))}
          </TaskPane>
          <ViewName>*前视</ViewName>
        </Viewport>
      </Work>
    </Shell>
  );
}
